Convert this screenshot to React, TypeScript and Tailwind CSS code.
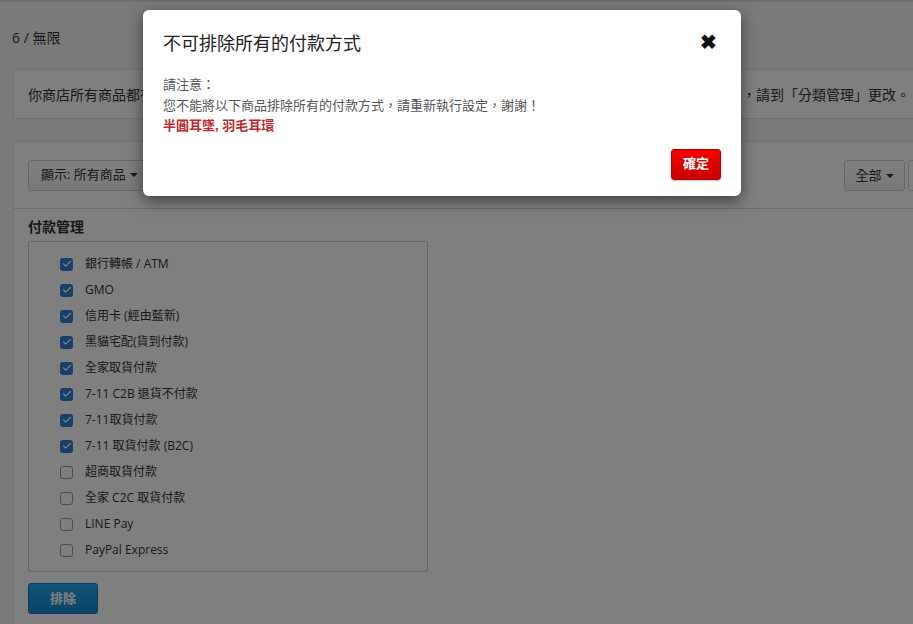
import { Check } from "lucide-react";

const methods = [
  { name: "銀行轉帳 / ATM", on: true },
  { name: "GMO", on: true },
  { name: "信用卡 (經由藍新)", on: true },
  { name: "黑貓宅配(貨到付款)", on: true },
  { name: "全家取貨付款", on: true },
  { name: "7-11 C2B 退貨不付款", on: true },
  { name: "7-11取貨付款", on: true },
  { name: "7-11 取貨付款 (B2C)", on: true },
  { name: "超商取貨付款", on: false },
  { name: "全家 C2C 取貨付款", on: false },
  { name: "LINE Pay", on: false },
  { name: "PayPal Express", on: false },
];

const pageFont = { fontFamily: '"Open Sans", "Noto Sans CJK TC", sans-serif' };
const modalFont = { fontFamily: '"Liberation Sans", "Noto Sans CJK TC", sans-serif' };

function Caret() {
  return <span className="inline-block ml-1 w-0 h-0 border-l-[4px] border-r-[4px] border-t-[4px] border-l-transparent border-r-transparent border-t-[#333] align-middle" />;
}

export default function App() {
  return (
    <div className="relative w-[913px] h-[624px] overflow-hidden bg-[#f5f5f5] text-[#333]" style={pageFont}>
      <div className="h-[2px] bg-[#dcdcdc]" />
      <div className="pl-[13px] w-[1100px]">
        <div className="pt-[26px] text-[14px] leading-5 -ml-px">6 / 無限</div>

        <div className="mt-[21px] h-[50px] flex items-center bg-white border border-[#e3e3e3] rounded-[4px] pl-[14px] text-[14px] whitespace-nowrap">
          你商店所有商品都有設定付款方式。如果你想要排除某些商品的付款方式，可以在下方設定；如需整個分類一併修改，請到「分類管理」更改。
        </div>

        <div className="mt-[22px] bg-white border border-[#e3e3e3] rounded-[4px] h-[600px]">
          <div className="h-[67px] border-b border-[#dcdcdc] flex items-center pl-[14px] pr-[111px]">
            <button className="h-[31px] px-[12px] border border-[#ccc] rounded-[3px] bg-gradient-to-b from-white to-[#f2f2f2] text-[13px] text-[#333] flex items-center">
              顯示: 所有商品<Caret />
            </button>
            <div className="flex-1" />
            <button className="mt-[1px] h-[31px] w-[61px] border border-[#ccc] rounded-[3px] bg-gradient-to-b from-white to-[#f2f2f2] text-[13px] text-[#333] flex items-center justify-center">
              全部<Caret />
            </button>
            <button className="mt-[1px] ml-[3px] h-[31px] w-[80px] border border-[#ccc] rounded-[3px] bg-white" />
          </div>

          <div className="pl-[14px] pt-[8px]">
            <div className="text-[14px] font-bold leading-5">付款管理</div>
            <div className="mt-[4px] w-[400px] h-[331px] border border-[#ccc] rounded-[2px] pt-[9px] pl-[31px]">
              {methods.map((m) => (
                <div key={m.name} className="h-[26px] flex items-center">
                  {m.on ? (
                    <span className="w-[13px] h-[13px] rounded-[3px] bg-[#2f7fd8] flex items-center justify-center">
                      <Check className="w-[10px] h-[10px] text-white" strokeWidth={3} />
                    </span>
                  ) : (
                    <span className="w-[13px] h-[13px] rounded-[3px] bg-white border border-[#999]" />
                  )}
                  <span className="ml-[12px] text-[12px]">{m.name}</span>
                </div>
              ))}
            </div>
            <button className="mt-[11px] w-[70px] h-[31px] rounded-[3px] bg-gradient-to-b from-[#24a8f0] to-[#1287d0] border border-[#1179bb] text-white text-[13px] font-bold">
              排除
            </button>
          </div>
        </div>
      </div>

      <div className="absolute inset-0 bg-black/50" />

      <div className="absolute left-[143px] top-[10px] w-[598px] h-[186px] bg-white rounded-[6px] shadow-[0_5px_15px_rgba(0,0,0,0.5)]" style={modalFont}>
        <div className="flex items-center justify-between pl-[20px] pr-[24px] pt-[21px]">
          <h3 className="text-[18px] leading-[22px] text-[#222]" style={{ fontFamily: '"Noto Sans CJK TC", sans-serif' }}>不可排除所有的付款方式</h3>
          <span className="text-[20px] font-bold text-[#111] leading-none">✖</span>
        </div>
        <div className="pl-[20px] pt-[22px] text-[13px] leading-[20.5px] text-[#555]">
          <div>請注意：</div>
          <div>您不能將以下商品排除所有的付款方式，請重新執行設定，謝謝！</div>
          <div className="font-bold text-[#c0292b]">半圓耳墜, 羽毛耳環</div>
        </div>
        <div className="flex justify-end pr-[20px] pt-[12px]">
          <button className="w-[50px] h-[31px] rounded-[3px] bg-gradient-to-b from-[#f50000] to-[#c80000] border border-[#b30000] text-white text-[13px] font-bold shadow-[0_1px_2px_rgba(0,0,0,0.25)]">
            確定
          </button>
        </div>
      </div>
    </div>
  );
}
